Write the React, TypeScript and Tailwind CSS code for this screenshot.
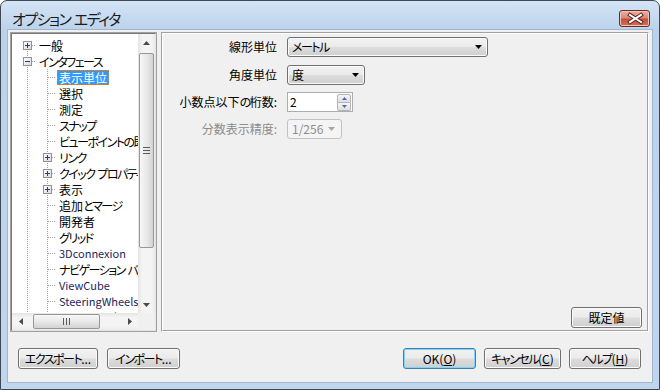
import React from 'react';

type Box = 'plus' | 'minus' | null;

interface TreeItem {
  label: string;
  level: 0 | 1;
  box?: Box;
  first?: boolean;
  selected?: boolean;
  latin?: boolean;
}

const items: TreeItem[] = [
  { label: '一般', level: 0, box: 'plus', first: true },
  { label: 'インタフェース', level: 0, box: 'minus' },
  { label: '表示単位', level: 1, selected: true },
  { label: '選択', level: 1 },
  { label: '測定', level: 1 },
  { label: 'スナップ', level: 1 },
  { label: 'ビューポイントの既定値', level: 1 },
  { label: 'リンク', level: 1, box: 'plus' },
  { label: 'クイック プロパティ', level: 1, box: 'plus' },
  { label: '表示', level: 1, box: 'plus' },
  { label: '追加とマージ', level: 1 },
  { label: '開発者', level: 1 },
  { label: 'グリッド', level: 1 },
  { label: '3Dconnexion', level: 1, latin: true },
  { label: 'ナビゲーション バー', level: 1 },
  { label: 'ViewCube', level: 1, latin: true },
  { label: 'SteeringWheels', level: 1, latin: true },
  { label: 'ユーザ インタフェース', level: 1 },
];

// kana in the original UI font are narrower than the kanji, so squeeze them
const Jp: React.FC<{ t: string }> = ({ t }) => (
  <>
    {t.split(/([\u3040-\u30ff]+)/).map((s, i) =>
      /[\u3040-\u30ff]/.test(s) ? (
        <span key={i} className="tracking-[-1.5px]">
          {s}
        </span>
      ) : (
        s
      )
    )}
  </>
);

// dotted connector cell, 24 wide; line sits at x=15.5
const Connector: React.FC<{ box?: Box; first?: boolean; onlyLine?: boolean }> = ({ box, first, onlyLine }) => (
  <svg width={onlyLine ? 20 : 24} height={16} className="shrink-0">
    <line x1={15.5} y1={first ? 8 : 0} x2={15.5} y2={16} stroke="#a0a0a0" strokeDasharray="1 1" />
    {!onlyLine && <line x1={16} y1={8.5} x2={24} y2={8.5} stroke="#a0a0a0" strokeDasharray="1 1" />}
    {box && (
      <>
        <defs>
          <linearGradient id="bx" x1="0" y1="0" x2="1" y2="1">
            <stop offset="0" stopColor="#ffffff" />
            <stop offset="1" stopColor="#d8d8d8" />
          </linearGradient>
        </defs>
        <rect x={11.5} y={4.5} width={8} height={8} fill="url(#bx)" stroke="#929292" />
        <line x1={13} y1={8.5} x2={18} y2={8.5} stroke="#1e3f8f" />
        {box === 'plus' && <line x1={15.5} y1={6} x2={15.5} y2={11} stroke="#1e3f8f" />}
      </>
    )}
  </svg>
);

const TreeRow: React.FC<{ item: TreeItem }> = ({ item }) => (
  <div className="flex h-[16px] items-center whitespace-nowrap">
    {item.level === 1 && <Connector onlyLine />}
    <Connector box={item.box} first={item.first} />
    <span
      className={
        item.selected
          ? 'ml-[1px] h-[15px] border border-dotted border-[#c9893f] bg-[#3399ff] px-[1px] text-[12px] leading-[13px] text-white'
          : `ml-[2px] px-[1px] leading-[15px] ${item.latin ? 'text-[11px] text-[#1c1f5c]' : 'text-[12px] text-black'}`
      }
    >
      <Jp t={item.label} />
    </span>
  </div>
);

const Tri: React.FC<{ dir: 'up' | 'down' | 'left' | 'right'; color?: string }> = ({ dir, color = '#4a4a4a' }) => {
  const d = {
    up: 'M0 4L3.5 0L7 4z',
    down: 'M0 0h7L3.5 4z',
    left: 'M4 0v7L0 3.5z',
    right: 'M0 0v7L4 3.5z',
  }[dir];
  const vertical = dir === 'up' || dir === 'down';
  return (
    <svg width={vertical ? 7 : 4} height={vertical ? 4 : 7}>
      <path d={d} fill={color} />
    </svg>
  );
};

const Btn: React.FC<{ className?: string; children: React.ReactNode; def?: boolean }> = ({ className, children, def }) => (
  <div
    className={`flex h-[21px] items-center justify-center rounded-[3px] border bg-[linear-gradient(#f2f2f2,#ebebeb_48%,#dddddd_52%,#cfcfcf)] text-[12px] text-black ${
      def ? 'border-[#3c7fb1] shadow-[inset_0_0_0_1px_#7fd3f6]' : 'border-[#707070] shadow-[inset_0_0_0_1px_#fbfbfb]'
    } ${className ?? ''}`}
  >
    {children}
  </div>
);

export default function App() {
  return (
    <div className="h-[390px] w-[660px] overflow-hidden bg-white font-['Noto_Sans_CJK_JP','Noto_Sans',sans-serif] [font-feature-settings:'palt']">
      <div className="flex h-full w-full flex-col rounded-t-[7px] border border-[#3f4853] bg-[linear-gradient(#d4e4f5,#bad2eb_30px,#c0d6ee)]">
        {/* title bar */}
        <div className="flex h-[29px] shrink-0 items-center justify-between pl-[11px] pr-[9px] pt-[6px]">
          <span className="text-[15px] leading-none text-[#1a1a1a]">
            <Jp t="オプション エディタ" />
          </span>
          <div className="flex h-[17px] w-[31px] items-center justify-center rounded-[3px] border border-[#6f2a20] bg-[linear-gradient(#eab0a2,#d98a78_45%,#c6503c_55%,#d56e56)] shadow-[inset_0_0_0_1px_#f0c4b8]">
            <svg width={31} height={17}>
              <path d="M10 5L21 12M21 5L10 12" stroke="#5a2a24" strokeWidth={4} strokeLinecap="square" />
              <path d="M10 5L21 12M21 5L10 12" stroke="#ffffff" strokeWidth={2} strokeLinecap="square" />
            </svg>
          </div>
        </div>

        {/* client area */}
        <div className="mx-[7px] mb-[7px] flex flex-1 flex-col bg-[#f0f0f0] pl-[2px] pr-[3px] pt-[2px] shadow-[0_0_0_1px_#9fb6d0]">
          <div className="flex h-[300px] gap-[4px]">
            {/* tree */}
            <div className="w-[147px] border border-[#a0a0a0]">
              <div className="grid h-full grid-cols-[1fr_17px] grid-rows-[1fr_17px] border border-b-[#e3e3e3] border-l-[#787878] border-r-[#e3e3e3] border-t-[#787878] bg-white">
                <div className="overflow-hidden pt-[3px]">
                  {items.map(it => (
                    <TreeRow key={it.label} item={it} />
                  ))}
                </div>
                {/* vertical scrollbar */}
                <div className="flex flex-col bg-[linear-gradient(90deg,#e4e4e4,#f4f4f4_25%,#f4f4f4_75%,#ebebeb)]">
                  <div className="flex h-[17px] items-center justify-center">
                    <Tri dir="up" />
                  </div>
                  <div className="flex-1 pt-[2px]">
                    <div className="mx-auto flex h-[195px] w-[15px] items-center justify-center rounded-[2px] border border-[#979797] bg-[linear-gradient(90deg,#f7f7f7,#e9e9e9_50%,#d3d3d3)]">
                      <svg width={7} height={7}>
                        <path d="M0 0.5h7M0 3.5h7M0 6.5h7" stroke="#5a5a5a" />
                      </svg>
                    </div>
                  </div>
                  <div className="flex h-[17px] items-center justify-center">
                    <Tri dir="down" />
                  </div>
                </div>
                {/* horizontal scrollbar */}
                <div className="flex bg-[linear-gradient(#e4e4e4,#f4f4f4_25%,#f4f4f4_75%,#ebebeb)]">
                  <div className="flex w-[17px] items-center justify-center">
                    <Tri dir="left" />
                  </div>
                  <div className="flex flex-1 items-center pl-[4px]">
                    <div className="flex h-[15px] w-[67px] items-center justify-center rounded-[2px] border border-[#979797] bg-[linear-gradient(#f7f7f7,#e9e9e9_50%,#d3d3d3)]">
                      <svg width={7} height={7}>
                        <path d="M0.5 0v7M3.5 0v7M6.5 0v7" stroke="#5a5a5a" />
                      </svg>
                    </div>
                  </div>
                  <div className="flex w-[17px] items-center justify-center">
                    <Tri dir="right" />
                  </div>
                </div>
                <div className="bg-[#f0f0f0]" />
              </div>
            </div>

            {/* settings panel */}
            <div className="flex-1 border border-b-white border-l-[#a0a0a0] border-r-white border-t-[#a0a0a0]">
              <div className="flex h-full flex-col border border-b-[#a0a0a0] border-l-white border-r-[#a0a0a0] border-t-white pt-[3px] text-[12px]">
                <div className="flex h-[20px] items-center">
                  <span className="w-[114px] text-right text-black">線形単位</span>
                  <div className="ml-[10px] flex h-[20px] w-[201px] items-center justify-between rounded-[3px] border border-[#707070] bg-[linear-gradient(#f2f2f2,#ebebeb_48%,#dddddd_52%,#cfcfcf)] pl-[4px] pr-[5px] shadow-[inset_0_0_0_1px_#fbfbfb]">
                    <span>
                      <Jp t="メートル" />
                    </span>
                    <Tri dir="down" color="#000" />
                  </div>
                </div>
                <div className="mt-[8px] flex h-[20px] items-center">
                  <span className="w-[114px] text-right text-black">角度単位</span>
                  <div className="ml-[10px] flex h-[20px] w-[78px] items-center justify-between rounded-[3px] border border-[#707070] bg-[linear-gradient(#f2f2f2,#ebebeb_48%,#dddddd_52%,#cfcfcf)] pl-[4px] pr-[5px] shadow-[inset_0_0_0_1px_#fbfbfb]">
                    <span>度</span>
                    <Tri dir="down" color="#000" />
                  </div>
                </div>
                <div className="mt-[7px] flex h-[20px] items-center">
                  <span className="w-[114px] text-right text-black">
                    <Jp t="小数点以下の桁数:" />
                  </span>
                  <div className="ml-[10px] flex h-[20px] w-[66px] items-center border border-[#abadb3] bg-white">
                    <span className="flex-1 pl-[2px]">2</span>
                    <div className="mr-[1px] flex h-[17px] w-[14px] flex-col">
                      <div className="flex flex-1 items-center justify-center rounded-t-[2px] border border-[#b5b5b5] bg-[linear-gradient(#f6f6f6,#dedede)]">
                        <svg width={5} height={3}>
                          <path d="M0 3L2.5 0L5 3z" fill="#4d6ab0" />
                        </svg>
                      </div>
                      <div className="flex flex-1 items-center justify-center rounded-b-[2px] border border-t-0 border-[#b5b5b5] bg-[linear-gradient(#f6f6f6,#dedede)]">
                        <svg width={5} height={3}>
                          <path d="M0 0h5L2.5 3z" fill="#4d6ab0" />
                        </svg>
                      </div>
                    </div>
                  </div>
                </div>
                <div className="mt-[7px] flex h-[20px] items-center">
                  <span className="w-[114px] text-right text-[#8d8d8d]">分数表示精度:</span>
                  <div className="ml-[10px] flex h-[20px] w-[55px] items-center justify-between rounded-[3px] border border-[#c2c2c2] bg-[#f4f4f4] pl-[4px] pr-[6px] text-[#8d8d8d]">
                    <span>1/256</span>
                    <Tri dir="down" color="#a6a6a6" />
                  </div>
                </div>
                <div className="flex-1" />
                <div className="mb-[2px] mr-[5px] flex justify-end">
                  <Btn className="h-[20px] w-[71px]">既定値</Btn>
                </div>
              </div>
            </div>
          </div>

          {/* dialog buttons */}
          <div className="mt-[16px] flex items-center pl-[8px] pr-[8px]">
            <Btn className="w-[80px]">
              <Jp t="エクスポート..." />
            </Btn>
            <Btn className="ml-[9px] w-[73px]">
              <Jp t="インポート..." />
            </Btn>
            <div className="flex-1" />
            <Btn def className="w-[73px]">
              OK(<span className="underline">O</span>)
            </Btn>
            <Btn className="ml-[8px] w-[77px]">
              <Jp t="キャンセル" />(<span className="underline">C</span>)
            </Btn>
            <Btn className="ml-[8px] w-[72px]">
              <Jp t="ヘルプ" />(<span className="underline">H</span>)
            </Btn>
          </div>
        </div>
      </div>
    </div>
  );
}
